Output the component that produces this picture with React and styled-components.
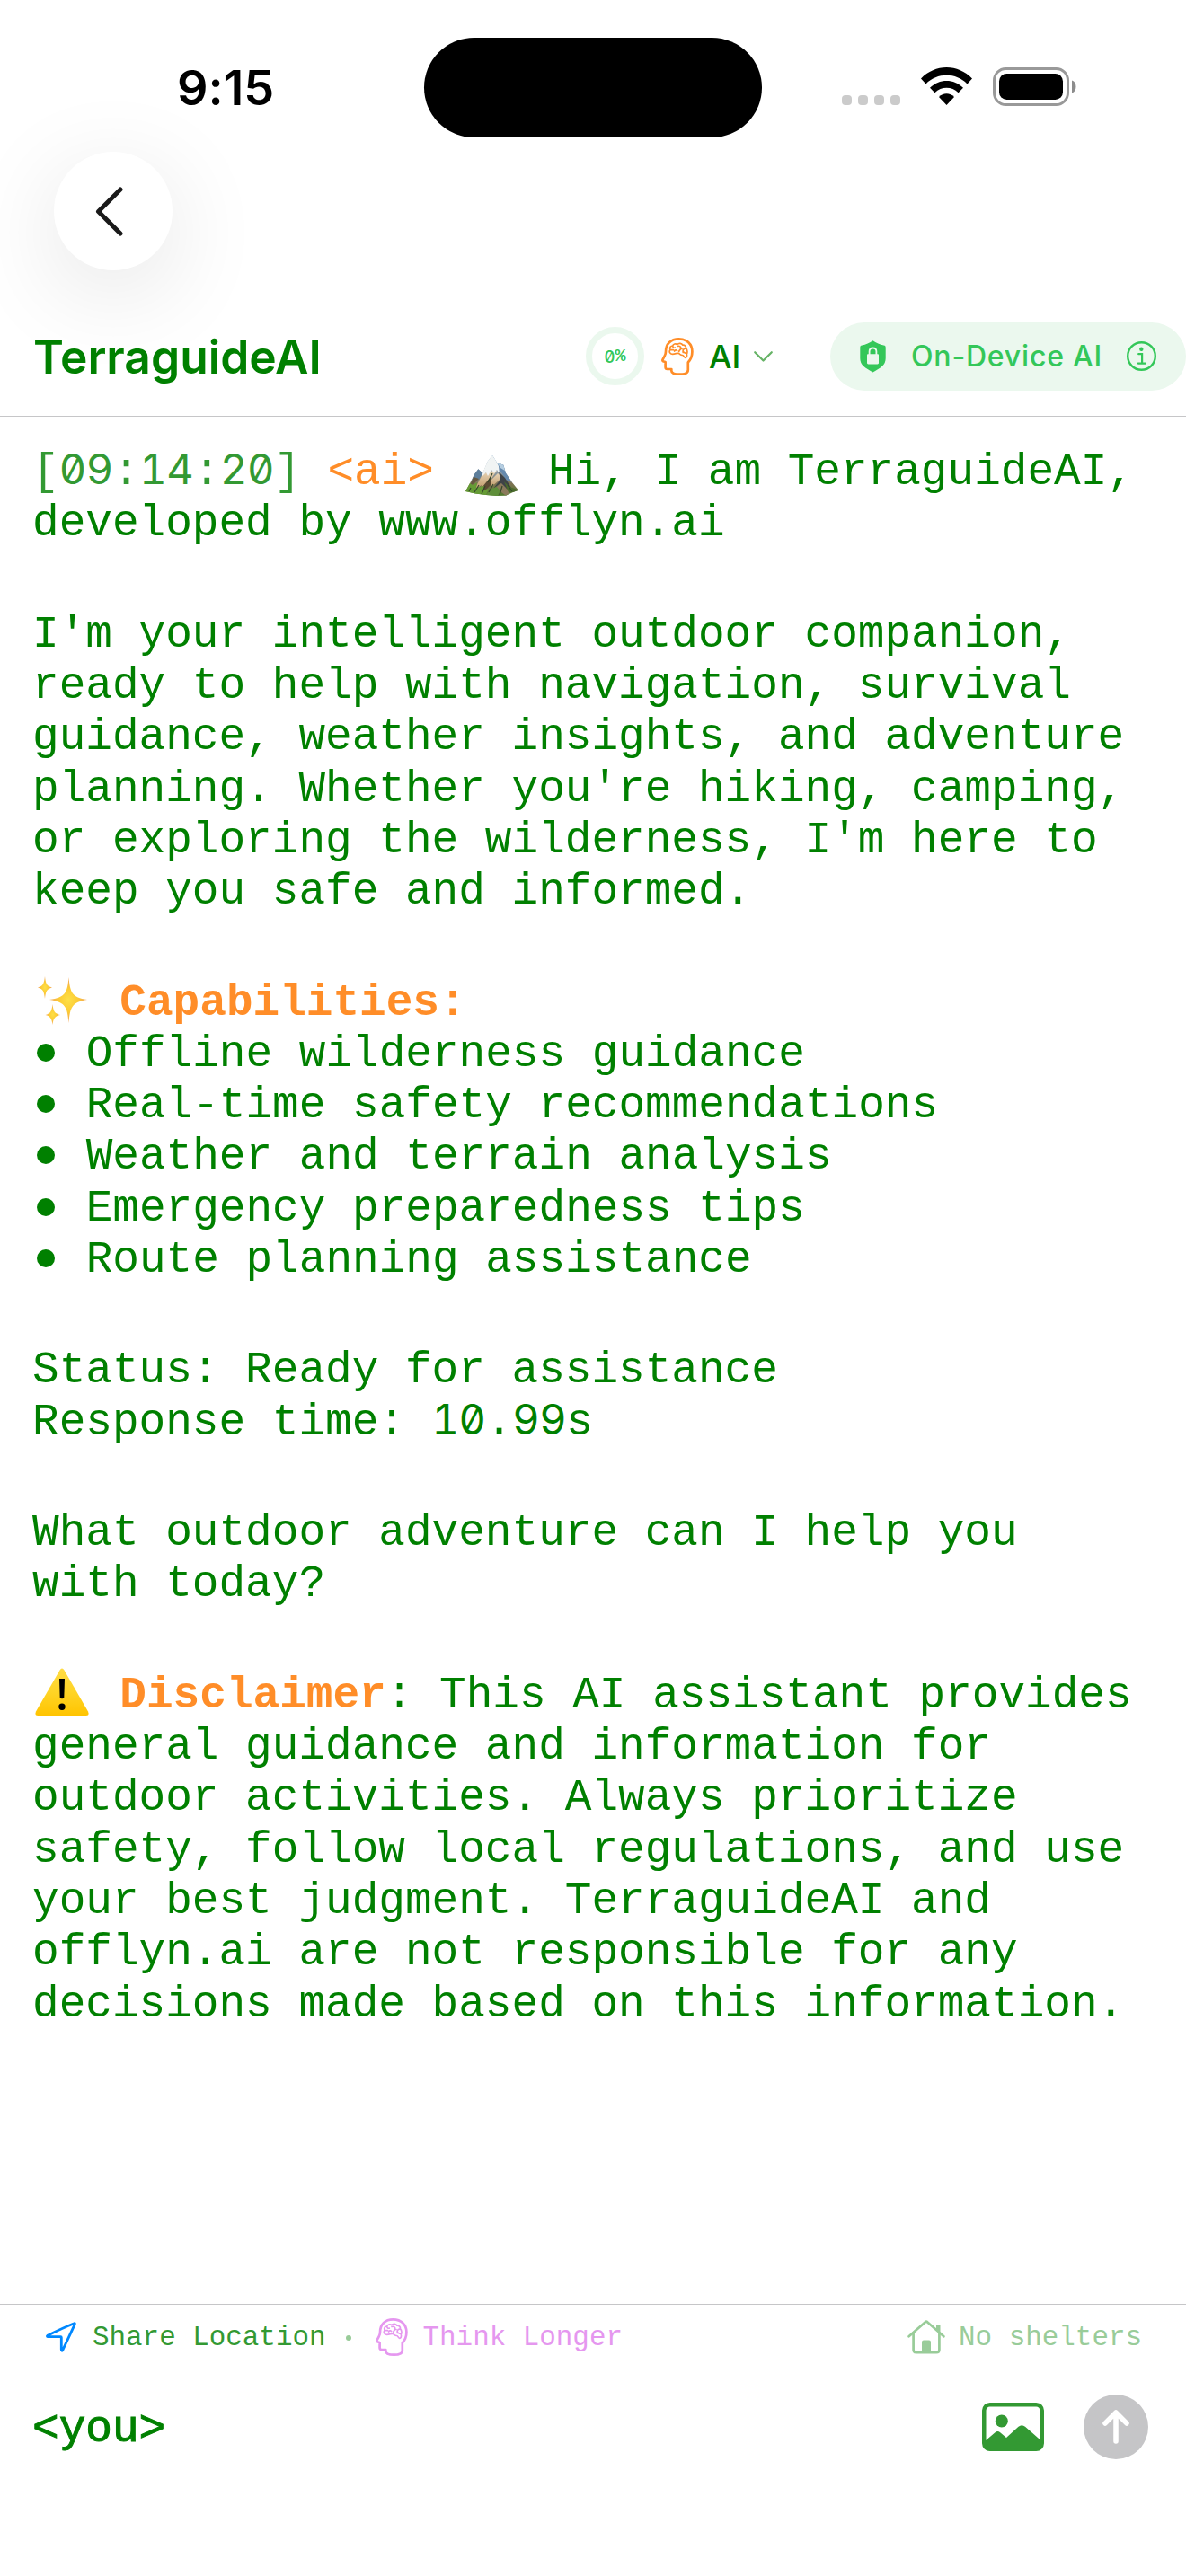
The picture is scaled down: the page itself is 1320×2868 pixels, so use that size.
import React from "react";
import styled, { createGlobalStyle } from "styled-components";

const GREEN = "#008000";
const SOFT_GREEN = "#339933";
const PALE_GREEN = "#99cc99";
const ORANGE = "#ff8d28";
const MINT = "#34c759";
const VIOLET = "#e597ef";

const SANS = `Inter, "Liberation Sans", sans-serif`;
const MONO = `"Liberation Mono", "DejaVu Sans Mono", monospace`;

const GlobalStyle = createGlobalStyle`
  *, *::before, *::after { box-sizing: border-box; }
  body { margin: 0; background: #fff; }
  svg { display: block; flex: none; overflow: visible; }
`;

const Screen = styled.div`
  display: flex;
  flex-direction: column;
  width: 1320px;
  height: 2868px;
  overflow: hidden;
  background: #fff;
  font-family: ${SANS};
  color: ${GREEN};
`;

const StatusBar = styled.div`
  display: grid;
  grid-template-columns: 472px 376px 472px;
  height: 169px;
  padding-top: 42px;
  flex: none;
`;

const Clock = styled.div`
  padding-left: 197px;
  font-size: 54px;
  font-weight: 600;
  line-height: 112px;
  letter-spacing: -0.1px;
  color: #000;
`;

const Island = styled.div`
  height: 111px;
  border-radius: 56px;
  background: #000;
`;

const Indicators = styled.div`
  display: flex;
  align-items: flex-start;
  padding: 33px 0 0 89px;
`;

const SignalDots = styled.div`
  display: flex;
  gap: 7px;
  padding-top: 31px;
  margin-right: 23px;
`;

const SignalDot = styled.span`
  width: 11px;
  height: 11px;
  border-radius: 4px;
  background: #cbcbcb;
`;

const WifiSlot = styled.div`
  margin-right: 23px;
`;

const NavRow = styled.div`
  display: flex;
  height: 190px;
  padding-left: 60px;
  flex: none;
`;

const BackButton = styled.button`
  display: flex;
  align-items: center;
  justify-content: center;
  width: 132px;
  height: 132px;
  padding: 0 9px 0 0;
  border: 0;
  border-radius: 50%;
  background: #fff;
  box-shadow: 0 24px 110px rgba(0, 0, 0, 0.11);
`;

const Header = styled.header`
  display: flex;
  align-items: center;
  height: 105px;
  padding: 0 0 29px 37px;
  border-bottom: 1px solid #c6c6c8;
  flex: none;
`;

const Title = styled.h1`
  width: 615px;
  margin: 0;
  font-size: 51.5px;
  font-weight: 600;
  line-height: 76px;
  letter-spacing: 0;
`;

const Ring = styled.div`
  display: flex;
  align-items: center;
  justify-content: center;
  width: 65px;
  height: 65px;
  border: 7px solid #ebf8ee;
  border-radius: 50%;
  color: ${MINT};
  font-family: ${MONO};
  font-size: 20px;
  font-weight: 700;
`;

const RingDigit = styled.span`
  font-family: ${SANS};
  font-size: 18.5px;
  font-weight: 500;
  font-feature-settings: "zero";
`;

const ModeButton = styled.div`
  display: flex;
  align-items: center;
  width: 207px;
  padding-left: 19px;
`;

const ModeLabel = styled.span`
  width: 50px;
  margin-left: 17px;
  font-size: 36px;
  font-weight: 500;
`;

const Pill = styled.div`
  display: flex;
  align-items: center;
  width: 396px;
  height: 76px;
  padding: 0 33px 0 33px;
  border-radius: 38px;
  background: #ebf8ee;
  color: ${MINT};
`;

const PillLabel = styled.span`
  flex: 1;
  margin-left: 28px;
  font-size: 32px;
  font-weight: 500;
  letter-spacing: 0.8px;
  white-space: nowrap;
`;

const Transcript = styled.main`
  flex: 1;
  display: flex;
  flex-direction: column;
  gap: 66.1px;
  padding: 34px 0 0 36px;
  font-family: ${MONO};
  font-size: 49.4px;
  line-height: 57.3px;
`;

const Paragraph = styled.p`
  margin: 0;
  white-space: pre;
`;

const Line = styled.span`
  display: block;
  height: 57.3px;
`;

const Digits = styled.span`
  font-family: ${SANS};
  font-size: 47px;
  font-weight: 400;
  font-feature-settings: "tnum", "zero";
  letter-spacing: -0.45px;
  line-height: 1;
`;

const Stamp = styled.span`
  color: ${SOFT_GREEN};
`;

const Accent = styled.span`
  color: ${ORANGE};
  font-weight: ${(p) => (p.$bold ? 700 : 400)};
`;

const Emoji = styled.span`
  display: inline-block;
  width: 67.7px;
  height: 48px;
  vertical-align: -11px;
`;

const Bullet = styled.span`
  display: inline-block;
  width: 20px;
  height: 20px;
  margin: 0 5px 0 5px;
  border-radius: 50%;
  background: ${GREEN};
  vertical-align: 5px;
`;

const Footer = styled.footer`
  height: 303px;
  border-top: 1px solid #c6c6c8;
  flex: none;
`;

const ActionRow = styled.div`
  display: flex;
  align-items: center;
  height: 72px;
  padding: 0 49px 0 51px;
  font-family: ${MONO};
  font-size: 30.9px;
`;

const Action = styled.span`
  color: ${(p) => p.$color};
  margin-left: ${(p) => p.$gap}px;
`;

const Separator = styled.span`
  width: 6px;
  height: 6px;
  margin: 2px 27px 0 22px;
  border-radius: 50%;
  background: ${PALE_GREEN};
`;

const Spacer = styled.span`
  flex: 1;
`;

const InputRow = styled.div`
  display: flex;
  align-items: center;
  height: 128px;
  padding: 0 42px 0 36px;
`;

const Prompt = styled.span`
  flex: 1;
  padding-top: 5px;
  font-family: ${MONO};
  font-size: 49.4px;
  -webkit-text-stroke: 1px ${GREEN};
`;

const SendButton = styled.button`
  display: flex;
  align-items: center;
  justify-content: center;
  width: 72px;
  height: 72px;
  margin-left: 44px;
  padding: 0;
  border: 0;
  border-radius: 50%;
  background: #c5c5c7;
`;

const WifiIcon = () => (
  <svg width="57" height="42" viewBox="0 0 57 42">
    <path d="M0 12.5C15.5-4.2 41.5-4.2 57 12.5L51.5 18.4C39 5.6 18 5.6 5.5 18.4Z" fill="#000" />
    <path d="M10 22.7C20.3 12.3 36.7 12.3 47 22.7L41.6 28.3C34.2 21 22.8 21 15.4 28.3Z" fill="#000" />
    <path d="M20 33C24.6 28 32.4 28 37 33L28.5 42Z" fill="#000" />
  </svg>
);

const BatteryIcon = () => (
  <svg width="94" height="43" viewBox="0 0 94 43">
    <rect x="1.5" y="1.5" width="82" height="40" rx="13" fill="none" stroke="#999" strokeWidth="3" />
    <rect x="7" y="7" width="71" height="29" rx="8.5" fill="#000" />
    <path d="M88 14.500C94 16 94 27 88 28.500Z" fill="#8c8c8c" />
  </svg>
);

const HeadIcon = ({ color }) => (
  <svg width="36" height="42" viewBox="0 0 36 42" fill="none" stroke={color} strokeLinejoin="round" strokeLinecap="round">
    <path
      d="M19.500 1.400C10.500 1.400 5 7 5 15.500C5 17.500 4.600 18.700 3.600 20.600L1.600 24.300C1.100 25.300 1.500 26.200 2.600 26.500L4.600 27V32.800C4.600 34.200 5.300 35 6.700 35H11.300V36.800C11.300 39.500 15 40.700 20.500 40.700C27 40.700 29.800 39.300 29.800 36V27.500C32.800 24.300 34.400 20.300 34.400 15.500C34.400 7 28.500 1.400 19.500 1.400Z"
      strokeWidth="2.700"
    />
    <path
      d="M12.500 18.300C9.500 18.300 8.300 15.500 10 13.500C9 11 10.500 9 12.700 9C13.300 6.900 16 6.300 17.800 7.500C19.500 5.600 22.800 6 23.800 8.200C26.200 8 27.800 9.800 27.500 12C29.300 13.500 29.300 17 28.300 18.300C29 20.500 28 22.300 26.700 22.300C25 22.300 25.300 19.500 23.500 19.500C21.500 19.500 20.800 18.300 19.500 17.600C17.800 16.700 16 18.300 12.500 18.300ZM12.700 9C12.800 10.700 13.800 11.400 15.300 11.200M10.500 13.700H13.500M17.600 14.500C16.500 13.300 15.300 13.700 14.600 15M18 9.500C20.300 8.700 22.500 10.300 21.500 12.500C21 14 20 14 19.700 15.500M21.600 12.500H23M27.300 12.200C24.600 11.600 23.700 14.500 24.300 16.400M24.300 15.500C25.500 17 27 17.500 28.200 17.800"
      strokeWidth="1.700"
    />
  </svg>
);

const ShieldIcon = () => (
  <svg width="29" height="36" viewBox="0 0 29 36">
    <path d="M14.500 0.300C11 2.800 6.500 4.800 2.400 5.400C0.800 5.600 0.300 6.400 0.300 8V20C0.300 27.500 6 30.500 14.500 35.500C23 30.500 28.700 27.500 28.700 20V8C28.700 6.400 28.200 5.600 26.600 5.400C22.500 4.800 18 2.800 14.500 0.300Z" fill={MINT} />
    <path d="M9.200 15.200H19.800C20.500 15.200 21 15.700 21 16.400V25C21 25.900 20.500 26.400 19.600 26.400H9.400C8.500 26.400 8 25.900 8 25V16.400C8 15.700 8.500 15.200 9.200 15.200Z" fill="#ebf8ee" />
    <path d="M10.600 16V12.300C10.600 7.200 18.400 7.200 18.400 12.300V16" fill="none" stroke="#ebf8ee" strokeWidth="1.800" />
  </svg>
);

const InfoIcon = () => (
  <svg width="33" height="33" viewBox="0 0 33 33" fill="none" stroke={MINT}>
    <circle cx="16.500" cy="16.500" r="15.300" strokeWidth="2.400" />
    <circle cx="16.300" cy="8.800" r="2.200" fill={MINT} stroke="none" />
    <path d="M13.200 14.200H17.100V24.300M12.800 24.600H21" strokeWidth="2.200" strokeLinecap="round" />
  </svg>
);

const MountainEmoji = () => (
  <svg width="68" height="48" viewBox="0 -5 68 48">
    <defs>
      <linearGradient id="ridge" x1="0" y1="0" x2="0" y2="1">
        <stop offset="0" stopColor="#a9c3d8" />
        <stop offset="0.450" stopColor="#8c98a0" />
        <stop offset="0.700" stopColor="#7d7252" />
        <stop offset="1" stopColor="#4f7a2c" />
      </linearGradient>
      <linearGradient id="rock" x1="0" y1="0" x2="0" y2="1">
        <stop offset="0" stopColor="#e8d5b8" />
        <stop offset="1" stopColor="#bd9664" />
      </linearGradient>
    </defs>
    <path d="M5 40L10 31L15 21L19.300 15.300L24.300 19.700L30 6.300L35 0L40 8L47.300 10.700L50 19.700L56.700 29.700L64 38.700L58 41L50 44.700L40 45L28 44L16 42.500Z" fill="url(#ridge)" />
    <path d="M19.300 15.300L15 21L12 28L17 25L20 27L24.300 19.700Z" fill="#5d7e9b" />
    <path d="M35 0L40 8L47.300 10.700L50 19.700L56.700 29.700L50 27L45 19L40 16Z" fill="#6689ad" />
    <path d="M40 8L47.300 10.700L49 17L44 14Z" fill="#b5cde0" />
    <path d="M24 21L15 38L23 33L22 39L31 30L40 17L31 18Z" fill="url(#rock)" />
    <path d="M41 20L34 27L33 36L42 28L46 24Z" fill="url(#rock)" />
    <path d="M35 0L30 6.300L25 17.500L23 24L28 19L30 23L34 16L37 20L40 16L43 21L42 12L39 6Z" fill="#f1f4f4" />
    <path d="M42 18L44 27L36 37L44 31L50 37L56 36L49 25Z" fill="#3e4247" />
    <path d="M33 24L24 35L27 39L33 33Z" fill="#5b4a33" />
    <path d="M14 24L10 34L15 31L20 26Z" fill="#66583f" />
    <path d="M5 40L10 31L13 33L18 30L17 36L26 34L24 39L31 37L28 44L16 42.500Z" fill="#659b35" />
    <path d="M28 44L34 37L40 35L44 38L41 45Z" fill="#5f8f3a" />
    <path d="M40 35L45 31L50 36L54 42L50 44.700L45 41Z" fill="#8b7a5c" />
    <path d="M48 29L54 35L60 37L64 38.700L58 41L53 41Z" fill="#4a6a2d" />
    <path d="M11 36L9 40M20 33L15 41M27 34L23 43M36 32L31 41M46 34L43 44M52 33L57 40M35 20L30 30" stroke="#34472a" strokeWidth="1.200" fill="none" />
  </svg>
);

const SparklesEmoji = () => (
  <svg width="68" height="48" viewBox="0 0 68 48">
    <defs>
      <radialGradient id="spark">
        <stop offset="0" stopColor="#fde047" />
        <stop offset="0.500" stopColor="#fccb35" />
        <stop offset="1" stopColor="#f0a25c" />
      </radialGradient>
    </defs>
    <path d="M40.500-5C42 12 44 17.500 61 20C44 23 42 28 40.500 46C39 28 37 23 19 20C37 17.500 39 12 40.500-5Z" fill="url(#spark)" />
    <path d="M14-6C14.800 2 16 5 22 6.500C16 8 14.800 11 14 19C13 11 12 8 6 6.500C12 5 13 2 14-6Z" fill="url(#spark)" />
    <path d="M22.500 25C23.300 33 25 35.500 31 37C25 38.500 23.300 41 22.500 48C21.600 41 20 38.500 14.500 37C20 35.500 21.600 33 22.500 25Z" fill="url(#spark)" />
  </svg>
);

const WarningEmoji = () => (
  <svg width="68" height="48" viewBox="0 0 68 48">
    <defs>
      <linearGradient id="warn" x1="0" y1="0" x2="0" y2="1">
        <stop offset="0" stopColor="#ffdc45" />
        <stop offset="0.500" stopColor="#ffd426" />
        <stop offset="1" stopColor="#ffc400" />
      </linearGradient>
    </defs>
    <path d="M30.500-4.500Q33-8.500 35.500-4.500L62 41.500Q64 46 59.500 46H6.500Q2 46 4 41.500Z" fill="url(#warn)" />
    <path d="M30 5H36L35.300 26Q33 28.500 30.700 26Z" fill="#000" />
    <circle cx="33" cy="36.300" r="3.700" fill="#000" />
  </svg>
);

const LocationIcon = () => (
  <svg width="34" height="34" viewBox="0 0 34 34" fill="none" stroke="#0088ff" strokeWidth="2.800" strokeLinejoin="round">
    <path d="M31.500 1.700C20.800 6 12 10.200 2 15.200C1 15.800 1.300 16.700 2.400 16.700H16.400C17 16.700 17.300 17 17.300 17.600V30.700C17.300 32.600 18.200 32.800 18.900 31.200C24 20.500 28 12 32.300 2.600C32.600 1.800 32.200 1.400 31.500 1.700Z" />
  </svg>
);

const HouseIcon = () => (
  <svg width="42" height="38" viewBox="0 0 42 38" fill="none" stroke={PALE_GREEN} strokeWidth="2.700" strokeLinecap="round" strokeLinejoin="round">
    <path d="M1.600 18.300L19.600 2.400C20.500 1.600 21.500 1.600 22.400 2.400L40.400 18.300" />
    <path d="M6.600 15V33C6.600 35 7.800 36.200 9.800 36.200H32.200C34.200 36.200 35.400 35 35.400 33V15" />
    <path d="M32 5H36.500V15L32 10.500Z" fill={PALE_GREEN} stroke="none" />
    <path d="M16 36.500V24.500Q16 22.600 18 22.600H24Q26 22.600 26 24.500V36.500Z" fill={PALE_GREEN} stroke="none" />
  </svg>
);

const PhotoIcon = () => (
  <svg width="69" height="54" viewBox="0 0 69 54">
    <rect x="2.250" y="2.250" width="64.500" height="49.500" rx="6.500" fill="none" stroke={SOFT_GREEN} strokeWidth="4.500" />
    <circle cx="21.800" cy="20.500" r="7" fill={SOFT_GREEN} />
    <path d="M3 43L14.500 33.200Q17.300 31 20.200 33.200L27 39L40.500 26.800Q44.300 23.800 48 26.800L66 42.500V50Q66 52 64 52H5Q3 52 3 50Z" fill={SOFT_GREEN} />
  </svg>
);

const BULLETS = [
  "Offline wilderness guidance",
  "Real-time safety recommendations",
  "Weather and terrain analysis",
  "Emergency preparedness tips",
  "Route planning assistance",
];

const INTRO = [
  "I'm your intelligent outdoor companion,",
  "ready to help with navigation, survival",
  "guidance, weather insights, and adventure",
  "planning. Whether you're hiking, camping,",
  "or exploring the wilderness, I'm here to",
  "keep you safe and informed.",
];

const DISCLAIMER = [
  "general guidance and information for",
  "outdoor activities. Always prioritize",
  "safety, follow local regulations, and use",
  "your best judgment. TerraguideAI and",
  "offlyn.ai are not responsible for any",
  "decisions made based on this information.",
];

export default function App() {
  return (
    <>
      <GlobalStyle />
      <Screen>
        <StatusBar>
          <Clock>9:15</Clock>
          <Island />
          <Indicators>
            <SignalDots>
              <SignalDot />
              <SignalDot />
              <SignalDot />
              <SignalDot />
            </SignalDots>
            <WifiSlot>
              <WifiIcon />
            </WifiSlot>
            <BatteryIcon />
          </Indicators>
        </StatusBar>

        <NavRow>
          <BackButton aria-label="Back">
            <svg width="31" height="55" viewBox="0 0 31 55">
              <path d="M28 3L3.500 27.500L28 52" fill="none" stroke="#1a1a1a" strokeWidth="5" strokeLinecap="round" strokeLinejoin="round" />
            </svg>
          </BackButton>
        </NavRow>

        <Header>
          <Title>TerraguideAI</Title>
          <Ring>
            <RingDigit>0</RingDigit>%
          </Ring>
          <ModeButton>
            <HeadIcon color={ORANGE} />
            <ModeLabel>AI</ModeLabel>
            <svg width="21" height="12" viewBox="0 0 21 12">
              <path d="M1.200 1.200L10.500 10.500L19.800 1.200" fill="none" stroke="#66b366" strokeWidth="2.200" strokeLinecap="round" strokeLinejoin="round" />
            </svg>
          </ModeButton>
          <Pill>
            <ShieldIcon />
            <PillLabel>On-Device AI</PillLabel>
            <InfoIcon />
          </Pill>
        </Header>

        <Transcript>
          <Paragraph>
            <Line>
              <Stamp>
                [<Digits>09</Digits>:<Digits>14</Digits>:<Digits>20</Digits>]
              </Stamp>{" "}
              <Accent>&lt;ai&gt;</Accent>{" "}
              <Emoji role="img" aria-label="mountain">
                <MountainEmoji />
              </Emoji>
              {" Hi, I am TerraguideAI,"}
            </Line>
            <Line>developed by www.offlyn.ai</Line>
          </Paragraph>

          <Paragraph>
            {INTRO.map((text) => (
              <Line key={text}>{text}</Line>
            ))}
          </Paragraph>

          <Paragraph>
            <Line>
              <Emoji role="img" aria-label="sparkles">
                <SparklesEmoji />
              </Emoji>{" "}
              <Accent $bold>Capabilities:</Accent>
            </Line>
            {BULLETS.map((text) => (
              <Line key={text}>
                <Bullet /> {text}
              </Line>
            ))}
          </Paragraph>

          <Paragraph>
            <Line>Status: Ready for assistance</Line>
            <Line>
              Response time: <Digits>10</Digits>.<Digits>99</Digits>s
            </Line>
          </Paragraph>

          <Paragraph>
            <Line>What outdoor adventure can I help you</Line>
            <Line>with today?</Line>
          </Paragraph>

          <Paragraph>
            <Line>
              <Emoji role="img" aria-label="warning">
                <WarningEmoji />
              </Emoji>{" "}
              <Accent $bold>Disclaimer</Accent>: This AI assistant provides
            </Line>
            {DISCLAIMER.map((text) => (
              <Line key={text}>{text}</Line>
            ))}
          </Paragraph>
        </Transcript>

        <Footer>
          <ActionRow>
            <LocationIcon />
            <Action $color={SOFT_GREEN} $gap={18}>Share Location</Action>
            <Separator />
            <HeadIcon color={VIOLET} />
            <Action $color={VIOLET} $gap={17}>Think Longer</Action>
            <Spacer />
            <HouseIcon />
            <Action $color={PALE_GREEN} $gap={15}>No shelters</Action>
          </ActionRow>
          <InputRow>
            <Prompt>&lt;you&gt;</Prompt>
            <PhotoIcon />
            <SendButton aria-label="Send">
              <svg width="30" height="38" viewBox="0 0 30 38">
                <path d="M15 35V4M3 15L15 3L27 15" fill="none" stroke="#fff" strokeWidth="5.500" strokeLinecap="round" strokeLinejoin="round" />
              </svg>
            </SendButton>
          </InputRow>
        </Footer>
      </Screen>
    </>
  );
}
